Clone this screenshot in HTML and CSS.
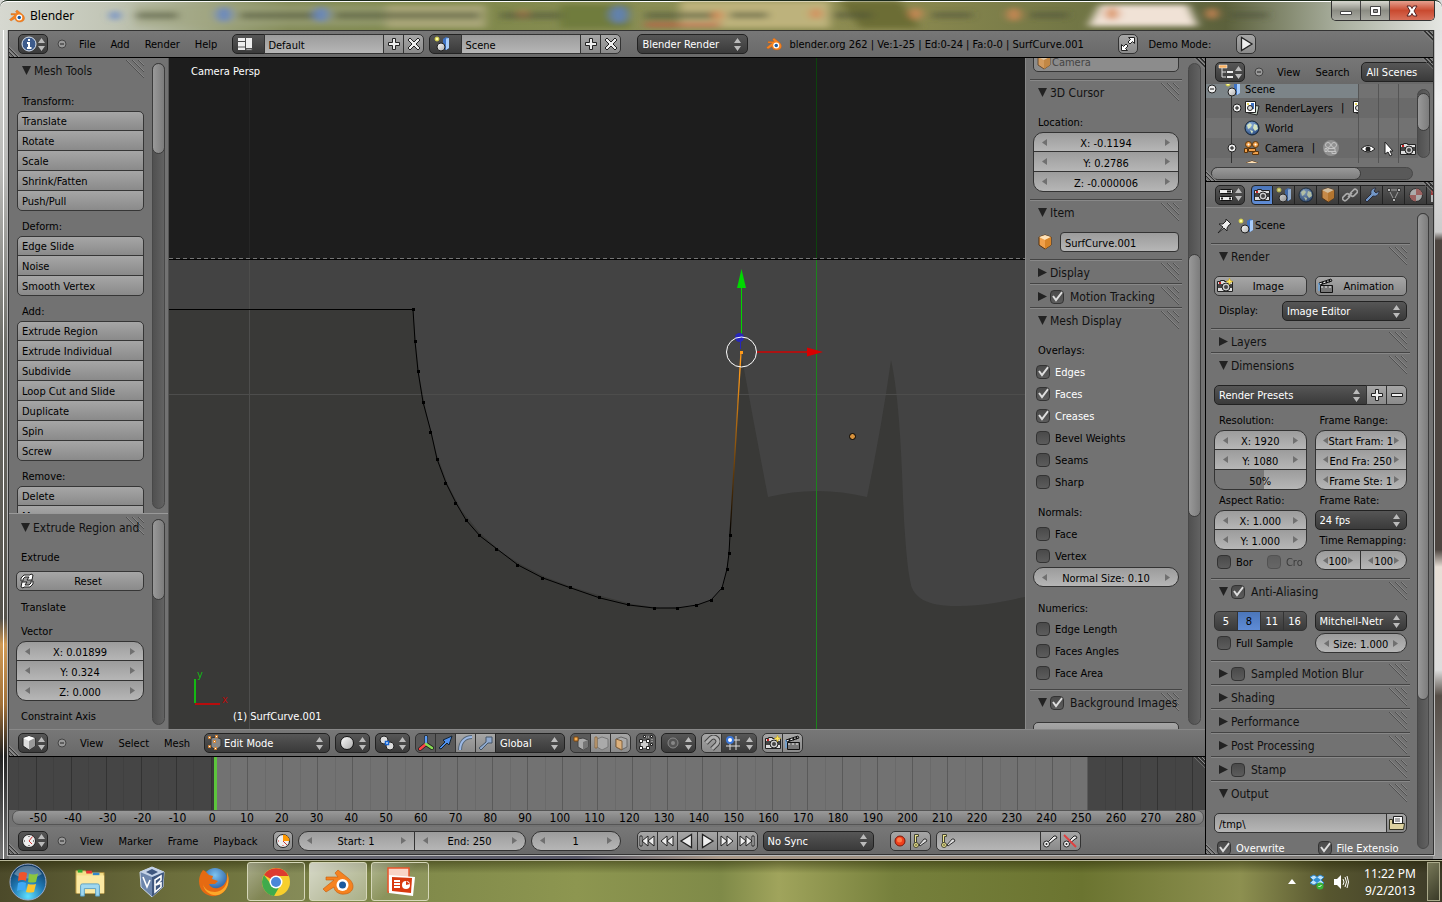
FILE: index.html
```html
<!DOCTYPE html>
<html lang="en">
<head>
<meta charset="utf-8">
<title>Blender</title>
<link rel="stylesheet" href="styles.css">
</head>
<body>
<svg class="defs" aria-hidden="true">
  <defs>
    <linearGradient id="gw" x1="0" y1="0" x2="1" y2="1"><stop offset="0" stop-color="#fff"/><stop offset="1" stop-color="#aaa"/></linearGradient>
    <radialGradient id="gb" cx=".4" cy=".3" r=".8"><stop offset="0" stop-color="#8fb4e0"/><stop offset="1" stop-color="#1e3f75"/></radialGradient>
    <radialGradient id="orb" cx=".5" cy=".9" r=".9"><stop offset="0" stop-color="#5fe0ff"/><stop offset=".5" stop-color="#1f78b4"/><stop offset="1" stop-color="#0d3256"/></radialGradient>
    <radialGradient id="globe" cx=".5" cy=".3" r=".8"><stop offset="0" stop-color="#7ec4f0"/><stop offset="1" stop-color="#123f8c"/></radialGradient>
  </defs>
  <symbol id="blender" viewBox="0 0 32 26"><path d="M1 20 12 11H4V8h12l-3-4 3-3 10 8c8 6 6 15-3 16-6 1-11-3-11-7L4 23z" fill="#f58220" stroke="#c25a0c" stroke-width=".6"/><circle cx="20.500" cy="16" r="6" fill="#fff"/><circle cx="20.500" cy="16" r="3.500" fill="#1d5a9e"/></symbol>
  <symbol id="info" viewBox="0 0 16 16"><circle cx="8" cy="8" r="7" fill="#3d5b8c" stroke="#dde6f2"/><path d="M8 3v2M6 7h2v5M6 12h4.500" stroke="#fff" stroke-width="2" fill="none"/></symbol>
  <symbol id="layout" viewBox="0 0 16 16"><path d="M1 2h7v3H1zM1 6h7v8H1zM9 2h6v10H9z" fill="#eee"/><path d="M1 11h7M9 12.500h6v1.500H9z" stroke="#555" fill="#eee"/></symbol>
  <symbol id="plus" viewBox="0 0 16 16"><path d="M6.500 2.500h3v4h4v3h-4v4h-3v-4h-4v-3h4z" fill="#eee" stroke="#222"/></symbol>
  <symbol id="minus" viewBox="0 0 16 16"><path d="M2.500 6.500h11v3h-11z" fill="#eee" stroke="#222"/></symbol>
  <symbol id="cross" viewBox="0 0 16 16"><path d="M4 2l4 4 4-4 2 2-4 4 4 4-2 2-4-4-4 4-2-2 4-4-4-4z" fill="#eee" stroke="#222"/></symbol>
  <symbol id="scene" viewBox="0 0 16 16"><path d="M9 3l3-2 3 1v10l-3 2-3-1z" fill="#3d72c4"/><path d="M12 2.500l3-.5v10l-3 2z" fill="#a9cdfa"/><circle cx="7" cy="11" r="4" fill="url(#gw)" stroke="#222"/><circle cx="3" cy="3" r="2" fill="#ffffa0" stroke="#cfc840"/></symbol>
  <symbol id="full" viewBox="0 0 16 16"><path d="M8.500 1.500h6v6l-2-2-2.500 2.500-2-2 2.500-2.500zM7.500 14.500h-6v-6l2 2 2.500-2.500 2 2-2.500 2.500z" fill="#fff" stroke="#222"/></symbol>
  <symbol id="play" viewBox="0 0 16 16"><path d="M3.500 1.500v13L14 8z" fill="#eee" stroke="#222" stroke-width="1.300"/></symbol>
  <symbol id="rplay" viewBox="0 0 16 16"><path d="M12.500 1.500v13L2 8z" fill="#eee" stroke="#222" stroke-width="1.300"/></symbol>
  <symbol id="ff" viewBox="0 0 16 16"><path d="M2 3v10l6-5zM8 3v10l6-5z" fill="#eee" stroke="#222"/></symbol>
  <symbol id="rw" viewBox="0 0 16 16"><path d="M14 3v10L8 8zM8 3v10L2 8z" fill="#eee" stroke="#222"/></symbol>
  <symbol id="end" viewBox="0 0 16 16"><path d="M1 3v10l6-5zM7 3v10l6-5zM13 3h2v10h-2z" fill="#eee" stroke="#222"/></symbol>
  <symbol id="start" viewBox="0 0 16 16"><path d="M15 3v10L9 8zM9 3v10L3 8zM1 3h2v10H1z" fill="#eee" stroke="#222"/></symbol>
  <symbol id="cubew" viewBox="0 0 16 16"><path d="M8 1l6 2v8l-6 4-6-4V3z" fill="#ddd" stroke="#222"/><path d="M2 3l6 3 6-3-6-2z" fill="#fff"/><path d="M8 6l6-3v8l-6 4z" fill="#999"/></symbol>
  <symbol id="cubeo" viewBox="0 0 16 16"><path d="M8 1l6 2v8l-6 4-6-4V3z" fill="#f0a04a" stroke="#54300c"/><path d="M2 3l6 3 6-3-6-2z" fill="#ffe2b8"/><path d="M8 6l6-3v8l-6 4z" fill="#d88528"/></symbol>
  <symbol id="edit" viewBox="0 0 16 16"><path d="M4 3l5-1 5 2v7l-5 4-5-3z" fill="#888" stroke="#333"/><g fill="#fff" stroke="#d9822b"><path d="M1.500 1.500h2v2h-2zM6.500 5.500h2v2h-2zM8.500.5h2v2h-2zM1.500 10.500h2v2h-2zM7.500 12.500h2v2h-2z"/></g></symbol>
  <symbol id="ball" viewBox="0 0 16 16"><circle cx="8" cy="8" r="6.500" fill="url(#gw)" stroke="#111"/></symbol>
  <symbol id="pivot" viewBox="0 0 16 16"><circle cx="5" cy="5" r="4" fill="#ddd" stroke="#222"/><circle cx="11" cy="11" r="4" fill="#ddd" stroke="#222"/><path d="M6.500 6.500h3v3h-3z" fill="#fff" stroke="#1666d6" stroke-width="1.500"/></symbol>
  <symbol id="manip" viewBox="0 0 16 16"><g stroke-linecap="round"><path d="M8 9V2M8 9l-6 5M8 9l6 4" stroke="#222" stroke-width="4"/><path d="M8 9V2" stroke="#5c9df5" stroke-width="2.500"/><path d="M8 9l-6 5" stroke="#f44" stroke-width="2.500"/><path d="M8 9l6 4" stroke="#8d5" stroke-width="2.500"/></g></symbol>
  <symbol id="arrow" viewBox="0 0 16 16"><path d="M1 13l6-6-2-2 9-4-3 9-2-2-6 6z" fill="#4f90ee" stroke="#123"/></symbol>
  <symbol id="arc" viewBox="0 0 16 16"><path d="M2 15C2 7 7 2 14 2" fill="none" stroke="#567" stroke-width="4"/><path d="M2 15C2 7 7 2 14 2" fill="none" stroke="#9db9e6" stroke-width="2"/></symbol>
  <symbol id="scalei" viewBox="0 0 16 16"><path d="M8 2h6v6h-4l-7 7-2-2 7-6z" fill="#8fa9cf" stroke="#456"/></symbol>
  <symbol id="vsel" viewBox="0 0 16 16"><path d="M5 4l5-1 5 2v7l-5 3-5-3z" fill="#aaa" stroke="#444"/><path d="M10 7l5-2v7l-5 3z" fill="#777"/><path d="M1 2h4v4H1z" fill="#f5ac50" stroke="#7a4710"/></symbol>
  <symbol id="esel" viewBox="0 0 16 16"><path d="M4 4l5-2 6 2v8l-6 3-5-3z" fill="#aaa" stroke="#777"/><path d="M2 2h2v11H2z" fill="#d8b58a" stroke="#8a6a45"/></symbol>
  <symbol id="fsel" viewBox="0 0 16 16"><path d="M3 4l5-2 6 2v8l-6 3-5-3z" fill="#aaa" stroke="#666"/><path d="M3 4l6 2v9l-6-3z" fill="#dcb07c" stroke="#80603c"/></symbol>
  <symbol id="occ" viewBox="0 0 16 16"><path d="M3 6h7v7H3z" fill="#ccc"/><path d="M6 2h8v8" fill="none" stroke="#ccc" stroke-dasharray="1 1"/><g fill="#fff" stroke="#222"><path d="M1.500 4.500h3v3h-3zM8.500 4.500h3v3h-3zM1.500 11.500h3v3h-3zM8.500 11.500h3v3h-3zM5.500.5h2v2h-2zM12.500.5h2v2h-2zM12.500 8.500h2v2h-2z"/></g></symbol>
  <symbol id="prop" viewBox="0 0 16 16"><circle cx="8" cy="8" r="5" fill="#555" stroke="#888"/><circle cx="8" cy="8" r="2" fill="#888"/></symbol>
  <symbol id="magnet" viewBox="0 0 16 16"><path d="M2 8l5-5c4-3 9 2 6 6l-5 5" fill="none" stroke="#444" stroke-width="5"/><path d="M2 8l5-5c4-3 9 2 6 6l-5 5" fill="none" stroke="#b0b0b0" stroke-width="3"/></symbol>
  <symbol id="snap" viewBox="0 0 16 16"><path d="M5 1v14M11 1v14M1 5h14M1 11h14" stroke="#ddd"/><circle cx="5" cy="5" r="3" fill="#fff" stroke="#3975d8" stroke-width="2"/></symbol>
  <symbol id="camera" viewBox="0 0 16 16"><path d="M.5 3.500h3v-1h4v1h8v10H.5z" fill="#ddd" stroke="#222"/><path d="M1 6h14v4H1z" fill="#444"/><circle cx="9" cy="9" r="4" fill="#ccc" stroke="#222"/><circle cx="9" cy="9" r="2" fill="#444"/><path d="M2 5h2" stroke="#c22" stroke-width="2"/></symbol>
  <symbol id="camstar" viewBox="0 0 16 16"><use href="#camera"/><path d="M12.500 0l1 2.500 2.500 1-2.500 1-1 2.500-1-2.500-2.500-1 2.500-1z" fill="#ffe75c" stroke="#b89610" stroke-width=".5"/></symbol>
  <symbol id="clap" viewBox="0 0 16 16"><path d="M2.500 7.500h12v7h-12z" fill="#777" stroke="#111"/><path d="M1 5l12-4 1 2L2 7z" fill="#eee" stroke="#111"/><path d="M4 4l1 2M8 3l1 2M11 2l1 2" stroke="#111" stroke-width="2"/><path d="M3 9h11" stroke="#eee" stroke-dasharray="2 2"/><path d="M1 5v8" stroke="#5af"/></symbol>
  <symbol id="reload" viewBox="0 0 16 16"><g fill="#fff" stroke="#222"><path d="M2 8V5l3-3h6l1-1 2 1-1 5H8l2-3H6L4 6v2z"/><path d="M14 8v3l-3 3H5l-1 1-2-1 1-5h5l-2 3h4l2-2V8z"/></g></symbol>
  <symbol id="clock" viewBox="0 0 16 16"><circle cx="8" cy="8" r="6.500" fill="#eee" stroke="#222"/><path d="M8 3v1M8 12v1M3 8h1M12 8h1" stroke="#222"/><path d="M11.500 3.500L8 8l3 3" fill="none" stroke="#c33"/></symbol>
  <symbol id="clocko" viewBox="0 0 16 16"><circle cx="8" cy="8" r="6.500" fill="#eee" stroke="#222"/><path d="M8 1.500V8h6.500A6.500 6.500 0 0 0 8 1.500z" fill="#f90"/><path d="M8 8l4 4M3 8h1M8 12v1" stroke="#c33"/></symbol>
  <symbol id="tree" viewBox="0 0 16 16"><path d="M1 1h8v3H1z" fill="#f9b060" stroke="#fff" stroke-width=".5"/><path d="M4 4v9h4M4 8h4" fill="none" stroke="#ddd"/><path d="M9 7h6v2H9zM9 12h6v2H9z" fill="#eee"/></symbol>
  <symbol id="props" viewBox="0 0 16 16"><rect x="1.500" y="2.500" width="13" height="4" rx="1" fill="#eee" stroke="#111"/><path d="M9 4.500h4" stroke="#222" stroke-width="2"/><rect x="1.500" y="9.500" width="13" height="4" rx="1" fill="#eee" stroke="#111"/><path d="M3 11.500h2M11 11.500h2" stroke="#222" stroke-width="2"/></symbol>
  <symbol id="layers" viewBox="0 0 16 16"><path d="M6 5l9 1-2 9-9-2z" fill="#ccd8cc" stroke="#222"/><path d="M1.500 1.500h10v11h-10z" fill="#fff" stroke="#222"/><path d="M7 3h3v6H7z" fill="#3d72c4"/><circle cx="6" cy="8" r="2.500" fill="#ddd" stroke="#222"/><path d="M3 3h2v2H3z" fill="#e8d860"/></symbol>
  <symbol id="world" viewBox="0 0 16 16"><circle cx="8" cy="8" r="7" fill="url(#gb)" stroke="#123"/><path d="M3 5l3-2 2 2-2 3-2 1zM10 4l3 1 1 4-3 2-2-3zM6 10l3 1-1 3z" fill="#d4e4c2"/></symbol>
  <symbol id="cine" viewBox="0 0 16 16"><g fill="#f0a04a" stroke="#5b340b"><circle cx="4.500" cy="4.500" r="3"/><circle cx="11.500" cy="4.500" r="3"/><path d="M4.500 8.500h7v3h-7z"/><path d="M.5 8.500h3v4h-3zM8.500 12.500l3-1h3v3h-6z"/></g><circle cx="4.500" cy="4.500" r="1" fill="#fff"/><circle cx="11.500" cy="4.500" r="1" fill="#fff"/></symbol>
  <symbol id="cineg" viewBox="0 0 16 16"><circle cx="8" cy="8" r="8" fill="#909090"/><g fill="#909090" stroke="#c4c4c4"><circle cx="5" cy="5" r="2.500"/><circle cx="11" cy="5" r="2.500"/><path d="M5 8.500h7v3H5zM2 8.500h2v3H2zM9 11.500h4v2H9z"/></g></symbol>
  <symbol id="eye" viewBox="0 0 16 16"><path d="M1 8q7-7 14 0-7 6-14 0z" fill="#fff" stroke="#222"/><circle cx="8" cy="8" r="2.500" fill="#222"/></symbol>
  <symbol id="cursor" viewBox="0 0 16 16"><path d="M5 1v12l3-2 2 4 2-1-2-4h3z" fill="#fff" stroke="#222"/></symbol>
  <symbol id="chain" viewBox="0 0 16 16"><g fill="none" stroke="#ccc" stroke-width="1.600"><rect x="0" y="8" width="8" height="4.500" rx="2.200" transform="rotate(-45 4 10)"/><rect x="8" y="3.500" width="8" height="4.500" rx="2.200" transform="rotate(-45 12 6)"/><path d="M6 10l4-4"/></g></symbol>
  <symbol id="wrench" viewBox="0 0 16 16"><path d="M3 15l-2-2 6-6C6 4 8 1 12 1l-2 3 2 2 3-2c0 4-3 6-6 5z" fill="#7fb0f0" stroke="#223"/></symbol>
  <symbol id="vdata" viewBox="0 0 16 16"><path d="M3 3h10L8 13z" fill="none" stroke="#bbb"/><g fill="#ddd" stroke="#333"><path d="M1.500 1.500h3v3h-3zM11.500 1.500h3v3h-3zM6.500 11.500h3v3h-3z"/></g></symbol>
  <symbol id="mat" viewBox="0 0 16 16"><circle cx="8" cy="8" r="6.500" fill="#ccc" stroke="#222"/><path d="M8 8V1.500A6.500 6.500 0 0 1 14.500 8zM8 8v6.500A6.500 6.500 0 0 1 1.500 8z" fill="#b86a68"/></symbol>
  <symbol id="checker" viewBox="0 0 16 16"><path d="M1 1h14v14H1z" fill="#ddd"/><path d="M1 1h7v7H1zM8 8h7v7H8z" fill="#b83a3a"/></symbol>
  <symbol id="pin" viewBox="0 0 16 16"><path d="M10 1l5 5-2 1-2 3 0 3-3-3-6 5 5-6-4-3 4 0 3-3z" fill="#eee" stroke="#222"/></symbol>
  <symbol id="folder" viewBox="0 0 16 16"><path d="M4.500 1.500h9v9h-9z" fill="#fff" stroke="#222"/><path d="M6 4h5M6 6h5" stroke="#555"/><path d="M.5 4.500h3v4h12l-1 6H.5z" fill="#ddd2a0" stroke="#332"/></symbol>
  <symbol id="rec" viewBox="0 0 16 16"><circle cx="8" cy="8" r="5" fill="#f0401c" stroke="#7c1608"/><circle cx="7.500" cy="7" r="2.500" fill="#ff7a48"/></symbol>
  <symbol id="key" viewBox="0 0 16 16"><path d="M6 9l6-6h2l1 2-2 1-6 5z" fill="#eee" stroke="#222"/><circle cx="4.500" cy="11" r="3" fill="#eee" stroke="#222"/><circle cx="4.500" cy="11" r="1" fill="#222"/></symbol>
  <symbol id="keying" viewBox="0 0 16 16"><path d="M7 12l5-6h2l1 2-7 5z" fill="#ddd" stroke="#333"/><path d="M2.500 1.500h4v2h-2v6h-2z" fill="#ece48a" stroke="#443"/><circle cx="4" cy="12" r="2.500" fill="#ece48a" stroke="#443"/><circle cx="4" cy="12" r=".8" fill="#332"/></symbol>
  <symbol id="keyx" viewBox="0 0 16 16"><use href="#key"/><path d="M2 2l12 12" stroke="#e04040" stroke-width="2"/></symbol>
  <symbol id="col" viewBox="0 0 10 10"><circle cx="5" cy="5" r="4" fill="#999" stroke="#444"/><path d="M3 5h4" stroke="#222"/></symbol>
  <symbol id="ex" viewBox="0 0 10 10"><circle cx="5" cy="5" r="4" fill="#eee" stroke="#222"/><path d="M3 5h4M5 3v4" stroke="#111"/></symbol>
  <symbol id="exm" viewBox="0 0 10 10"><circle cx="5" cy="5" r="4" fill="#eee" stroke="#222"/><path d="M3 5h4" stroke="#111"/></symbol>
</svg>

<div class="window">
  <header class="titlebar">
    <svg class="glass" viewBox="0 0 1442 30" preserveAspectRatio="none" aria-hidden="true">
      <defs><filter id="soft"><feGaussianBlur stdDeviation="5 3"/></filter></defs>
      <g filter="url(#soft)">
        <path d="M136 4h250v22H136z" fill="#a0a582" opacity=".5"/>
        <path d="M386 4h100v24H386z" fill="#a9a678"/><path d="M560 4h70v24h-70z" fill="#6f7c3c"/>
        <path d="M680 0h150v28H680z" fill="#bdb27c"/><path d="M840 0h60l20 28h-60z" fill="#6c6d34"/>
        <path d="M1100 4h88l10 22h-110z" fill="#f0e2d6"/>
        <g fill="#5f84cc" opacity=".8"><circle cx="115" cy="15" r="5"/><circle cx="224" cy="14" r="8"/><circle cx="321" cy="14" r="8"/><circle cx="619" cy="14" r="9"/></g>
        <g fill="#d98a56" opacity=".8"><circle cx="523" cy="14" r="5"/><circle cx="717" cy="15" r="6"/><circle cx="816" cy="13" r="6"/><circle cx="916" cy="13" r="6"/><circle cx="1014" cy="14" r="7"/><circle cx="1112" cy="13" r="7"/><circle cx="1212" cy="13" r="6"/></g>
        <g fill="#4c4f35" opacity=".5"><path d="M136 11h42v8h-42zM240 11h74v8h-74zM335 11h145v8H335zM500 11h62v8h-62zM645 11h68v8h-68zM730 11h38v7h-38zM832 11h40v7h-40zM932 11h40v7h-40zM1030 11h38v7h-38zM1230 11h38v7h-38z"/></g>
        <path d="M645 23h75v3h-75z" fill="#c4553f"/>
      </g>
    </svg>
    <svg class="logo"><use href="#blender"/></svg>
    <h1>Blender</h1>
    <div class="winbtns">
      <button type="button" aria-label="Minimize"><svg viewBox="0 0 14 12"><path d="M1.500 6.500h11v3h-11z" fill="#fff" stroke="#444"/></svg></button>
      <button type="button" aria-label="Maximize"><svg viewBox="0 0 14 12"><path d="M2.500 1.500h10v9h-10z" fill="#fff" stroke="#444"/><path d="M5.500 4.500h4v3h-4z" fill="#999" stroke="#444"/></svg></button>
      <button type="button" class="close" aria-label="Close"><svg viewBox="0 0 14 12"><path d="M2 1h3.500L7 3.500 8.500 1H12L9 6l3 5H8.500L7 8.500 5.500 11H2l3-5z" fill="#fff" stroke="#522"/></svg></button>
    </div>
  </header>

  <div class="app">
    <div class="bar info corner-tr corner-bl">
      <button class="ed" type="button" aria-label="Editor type: Info"><svg><use href="#info"/></svg></button>
      <svg class="col"><use href="#col"/></svg>
      <nav class="menu"><button type="button">File</button><button type="button">Add</button><button type="button">Render</button><button type="button">Help</button></nav>
      <div class="idb"><button class="dk" type="button" aria-label="Screen layouts"><svg><use href="#layout"/></svg></button><input type="text" value="Default" aria-label="Screen"><button type="button" aria-label="Add screen"><svg><use href="#plus"/></svg></button><button type="button" aria-label="Delete screen"><svg><use href="#cross"/></svg></button></div>
      <div class="idb"><button class="dk" type="button" aria-label="Scenes"><svg><use href="#scene"/></svg></button><input type="text" value="Scene" aria-label="Scene"><button type="button" aria-label="Add scene"><svg><use href="#plus"/></svg></button><button type="button" aria-label="Delete scene"><svg><use href="#cross"/></svg></button></div>
      <select class="w110 engine" aria-label="Render engine"><option>Blender Render</option></select>
      <svg class="blogo"><use href="#blender"/></svg>
      <span class="stats">blender.org 262 | Ve:1-25 | Ed:0-24 | Fa:0-0 | SurfCurve.001</span>
      <button class="sq fulls" type="button" aria-label="Full screen"><svg><use href="#full"/></svg></button>
      <span class="demo">Demo Mode:</span>
      <button class="sq" type="button" aria-label="Play demo"><svg><use href="#play"/></svg></button>
    </div>

    <div class="main">
      <div class="left">
        <div class="view">
          <aside class="shelf">
            <section class="region">
              <div class="inner">
                <h2 class="head open">Mesh Tools</h2>
                <div class="body">
                  <p class="lbl">Transform:</p>
                  <div class="grp"><button type="button">Translate</button><button type="button">Rotate</button><button type="button">Scale</button><button type="button">Shrink/Fatten</button><button type="button">Push/Pull</button></div>
                  <p class="lbl">Deform:</p>
                  <div class="grp"><button type="button">Edge Slide</button><button type="button">Noise</button><button type="button">Smooth Vertex</button></div>
                  <p class="lbl">Add:</p>
                  <div class="grp"><button type="button">Extrude Region</button><button type="button">Extrude Individual</button><button type="button">Subdivide</button><button type="button">Loop Cut and Slide</button><button type="button">Duplicate</button><button type="button">Spin</button><button type="button">Screw</button></div>
                  <p class="lbl">Remove:</p>
                  <div class="grp"><button type="button">Delete</button><button type="button">Merge</button></div>
                </div>
              </div>
              <div class="vs"><i class="t90"></i></div>
            </section>
            <section class="region oper">
              <div class="inner">
                <h2 class="head open">Extrude Region and</h2>
                <div class="body">
                  <p class="lbl">Extrude</p>
                  <button class="btn ic reset" type="button"><svg><use href="#reload"/></svg><span>Reset</span></button>
                  <p class="lbl gap">Translate</p>
                  <p class="lbl gap2">Vector</p>
                  <div class="grp num"><input type="text" value="X: 0.01899" aria-label="Vector X"><input type="text" value="Y: 0.324" aria-label="Vector Y"><input type="text" value="Z: 0.000" aria-label="Vector Z"></div>
                  <p class="lbl">Constraint Axis</p>
                  <div class="chk axis"><input type="checkbox" aria-label="Constrain X axis"></div>
                </div>
              </div>
              <div class="vs"><i class="t80"></i></div>
            </section>
          </aside>

          <svg class="canvas" viewBox="169 58 856 671" preserveAspectRatio="xMidYMid slice" role="img" aria-label="3D view">
            <path d="M169 58h856v671H169z" fill="#434343"/>
            <path d="M169 58h856v201H169z" fill="#1d1d1d"/>
            <path d="M249.500 58v201" stroke="#262626"/>
            <path d="M169 310H413L416 345 420 380 428 420 437 455 448 485 462 511 480 533 500 551 520 564 545 577 575 588 605 597 632 604 660 608 690 607 712 600 723 588 729 555 732 510 738 400 742 358Q755 430 768 497 817 485 867 497 882 425 891 360C900 400 902 470 904 520 906 550 908 575 912 588 920 606 945 606 960 606 985 606 1010 600 1025 597V729H169z" fill="#393937"/>
            <path d="M249.500 260v469M169 394.500h856" stroke="#4d4d4c"/>
            <path d="M816.500 58v201" stroke="#0d420d"/><path d="M816.500 260v469" stroke="#1c831c"/>
            <path d="M169 258.500h856" stroke="#777" stroke-dasharray="4 3"/><path d="M169 259.500h856" stroke="#000"/>
            <path fill="none" stroke="#000" d="M169 309.500H413L415 341 418 371 423 402 431 432 437 459 446 483 456 503 466 520 480 536 497 549 518 565 543 578 571 588 600 598 629 605 654 608 677 608 697 605 711 600 722 588 727 569 729 553 730 535"/>
            <path d="M412 308h3v3h-3zM414 340h3v3h-3zM417 370h3v3h-3zM422 401h3v3h-3zM429 431h3v3h-3zM436 458h3v3h-3zM444 482h3v3h-3zM454 502h3v3h-3zM465 519h3v3h-3zM478 534h3v3h-3zM495 548h3v3h-3zM516 564h3v3h-3zM541 577h3v3h-3zM569 586h3v3h-3zM598 596h3v3h-3zM627 603h3v3h-3zM653 607h3v3h-3zM676 607h3v3h-3zM695 604h3v3h-3zM710 599h3v3h-3zM721 587h3v3h-3zM726 568h3v3h-3zM728 552h3v3h-3zM729 534h3v3h-3z"/>
            <defs><linearGradient id="sel" gradientUnits="userSpaceOnUse" x1="0" y1="352" x2="0" y2="535"><stop offset=".1" stop-color="#ff9a1a"/><stop offset="1" stop-color="#000"/></linearGradient></defs>
            <path d="M741 352L730 535" stroke="url(#sel)" stroke-width="1.300"/>
            <path d="M741 286h1v50h-1z" fill="#00d800"/><path d="M741.500 269l-4.500 19h9z" fill="#00d800"/>
            <path d="M757 351.500h52v1h-52z" fill="#d80000" stroke="#d80000" stroke-width=".4"/><path d="M807 347.500v9l16-4.500z" fill="#d80000"/>
            <circle cx="739.500" cy="337.500" r="4.500" fill="#2727b8"/><path d="M740 340h1v9h-1z" fill="#2727b8"/>
            <circle cx="741.500" cy="352" r="15" fill="none" stroke="#fff"/><path d="M740 351h3v3h-3z" fill="#ff9a1a"/>
            <circle cx="852.500" cy="436.500" r="3" fill="#d8923c" stroke="#000"/>
            <path d="M194 679h2v24h-2z" fill="#13b813"/><path d="M195 703h25v2h-25z" fill="#b80c0c"/>
            <text x="197" y="678" fill="#13b813">y</text><text x="222" y="703" fill="#b80c0c">x</text>
            <text x="191" y="75" fill="#fff">Camera Persp</text><text x="233" y="720" fill="#fff">(1) SurfCurve.001</text>
          </svg>

          <aside class="npanel region corner-tr">
            <div class="inner">
              <div class="body camrow"><button class="btn ic dim" type="button"><svg><use href="#cubeo"/></svg><span>Camera</span></button></div>
              <h2 class="head open">3D Cursor</h2>
              <div class="body"><p class="lbl">Location:</p><div class="grp num"><input type="text" value="X: -0.1194" aria-label="Cursor X"><input type="text" value="Y: 0.2786" aria-label="Cursor Y"><input type="text" value="Z: -0.000006" aria-label="Cursor Z"></div></div>
              <h2 class="head open">Item</h2>
              <div class="body item"><svg><use href="#cubeo"/></svg><input class="txt" type="text" value="SurfCurve.001" aria-label="Item name"></div>
              <h2 class="head">Display</h2>
              <h2 class="head"><label><input type="checkbox" checked>Motion Tracking</label></h2>
              <h2 class="head open">Mesh Display</h2>
              <div class="body checks">
                <p class="lbl">Overlays:</p>
                <label class="chk on"><input type="checkbox" checked><span>Edges</span></label>
                <label class="chk on"><input type="checkbox" checked><span>Faces</span></label>
                <label class="chk on"><input type="checkbox" checked><span>Creases</span></label>
                <label class="chk"><input type="checkbox"><span>Bevel Weights</span></label>
                <label class="chk"><input type="checkbox"><span>Seams</span></label>
                <label class="chk"><input type="checkbox"><span>Sharp</span></label>
                <p class="lbl sp">Normals:</p>
                <label class="chk"><input type="checkbox"><span>Face</span></label>
                <label class="chk"><input type="checkbox"><span>Vertex</span></label>
                <div class="grp num"><input type="text" value="Normal Size: 0.10" aria-label="Normal size"></div>
                <p class="lbl sp">Numerics:</p>
                <label class="chk"><input type="checkbox"><span>Edge Length</span></label>
                <label class="chk"><input type="checkbox"><span>Faces Angles</span></label>
                <label class="chk"><input type="checkbox"><span>Face Area</span></label>
              </div>
              <h2 class="head open"><label><input type="checkbox" checked>Background Images</label></h2>
              <div class="body"><button class="btn" type="button" aria-label="Add image"></button></div>
            </div>
            <div class="vs"><i class="tn"></i></div>
          </aside>
        </div>

        <div class="bar vbar corner-bl">
          <button class="ed" type="button" aria-label="Editor type: 3D View"><svg><use href="#cubew"/></svg></button>
          <svg class="col"><use href="#col"/></svg>
          <nav class="menu"><button type="button">View</button><button type="button">Select</button><button type="button">Mesh</button></nav>
          <label class="isel mode"><svg><use href="#edit"/></svg><select aria-label="Mode"><option>Edit Mode</option></select></label>
          <button class="ed wide" type="button" aria-label="Shading"><svg><use href="#ball"/></svg></button>
          <button class="ed wide" type="button" aria-label="Pivot"><svg><use href="#pivot"/></svg></button>
          <div class="row"><button class="dn" type="button" aria-label="Manipulator"><svg><use href="#manip"/></svg></button><button class="dn" type="button" aria-label="Translate manipulator"><svg><use href="#arrow"/></svg></button><button type="button" aria-label="Rotate manipulator"><svg><use href="#arc"/></svg></button><button type="button" aria-label="Scale manipulator"><svg><use href="#scalei"/></svg></button><select class="w70" aria-label="Orientation"><option>Global</option></select></div>
          <div class="row"><button class="dn" type="button" aria-label="Vertex select"><svg><use href="#vsel"/></svg></button><button type="button" aria-label="Edge select"><svg><use href="#esel"/></svg></button><button type="button" aria-label="Face select"><svg><use href="#fsel"/></svg></button></div>
          <button class="sq dn" type="button" aria-label="Limit to visible"><svg><use href="#occ"/></svg></button>
          <button class="ed wide" type="button" aria-label="Proportional editing"><svg><use href="#prop"/></svg></button>
          <div class="row"><button type="button" aria-label="Snap"><svg><use href="#magnet"/></svg></button><button class="ed wide" type="button" aria-label="Snap element"><svg><use href="#snap"/></svg></button></div>
          <div class="row"><button type="button" aria-label="Render image"><svg><use href="#camstar"/></svg></button><button type="button" aria-label="Render animation"><svg><use href="#clap"/></svg></button></div>
        </div>

        <div class="timeline corner-tr"><div class="before"></div><div class="during"></div><div class="after"></div></div>
        <div class="ruler"><div><span>-50</span><span>-40</span><span>-30</span><span>-20</span><span>-10</span><span>0</span><span>10</span><span>20</span><span>30</span><span>40</span><span>50</span><span>60</span><span>70</span><span>80</span><span>90</span><span>100</span><span>110</span><span>120</span><span>130</span><span>140</span><span>150</span><span>160</span><span>170</span><span>180</span><span>190</span><span>200</span><span>210</span><span>220</span><span>230</span><span>240</span><span>250</span><span>260</span><span>270</span><span>280</span></div></div>
        <div class="bar tbar corner-bl">
          <button class="ed" type="button" aria-label="Editor type: Timeline"><svg><use href="#clock"/></svg></button>
          <svg class="col"><use href="#col"/></svg>
          <nav class="menu"><button type="button">View</button><button type="button">Marker</button><button type="button">Frame</button><button type="button">Playback</button></nav>
          <button class="sq" type="button" aria-label="Use preview range"><svg><use href="#clocko"/></svg></button>
          <div class="row numrow"><input class="w116" type="text" value="Start: 1" aria-label="Start frame"><input class="w112" type="text" value="End: 250" aria-label="End frame"></div>
          <div class="row numrow"><input class="w90" type="text" value="1" aria-label="Current frame"></div>
          <div class="row transport"><button type="button" aria-label="Jump to start"><svg><use href="#start"/></svg></button><button type="button" aria-label="Previous keyframe"><svg><use href="#rw"/></svg></button><button type="button" aria-label="Play reverse"><svg><use href="#rplay"/></svg></button><button type="button" aria-label="Play"><svg><use href="#play"/></svg></button><button type="button" aria-label="Next keyframe"><svg><use href="#ff"/></svg></button><button type="button" aria-label="Jump to end"><svg><use href="#end"/></svg></button></div>
          <select class="w110" aria-label="Sync"><option>No Sync</option></select>
          <div class="row rec"><button type="button" aria-label="Auto key"><svg><use href="#rec"/></svg></button><button type="button" aria-label="Keying"><svg><use href="#keying"/></svg></button></div>
          <div class="row keyset"><button class="fld" type="button" aria-label="Active keying set"><svg><use href="#keying"/></svg></button><button type="button" aria-label="Insert keyframe"><svg><use href="#key"/></svg></button><button type="button" aria-label="Delete keyframe"><svg><use href="#keyx"/></svg></button></div>
        </div>
      </div>

      <div class="right">
        <div class="bar obar corner-tr">
          <button class="ed" type="button" aria-label="Editor type: Outliner"><svg><use href="#tree"/></svg></button>
          <svg class="col"><use href="#col"/></svg>
          <nav class="menu"><button type="button">View</button><button type="button">Search</button></nav>
          <select class="scenes" aria-label="Display mode"><option>All Scenes</option></select>
        </div>
        <div class="outliner">
          <ul>
            <li class="hl"><svg class="e"><use href="#exm"/></svg><svg><use href="#scene"/></svg><span>Scene</span></li>
            <li class="l1"><svg class="e"><use href="#ex"/></svg><svg><use href="#layers"/></svg><span>RenderLayers</span><b>|</b><svg class="half"><use href="#layers"/></svg></li>
            <li class="l2"><svg><use href="#world"/></svg><span>World</span></li>
            <li class="l3"><svg class="e"><use href="#ex"/></svg><svg><use href="#cine"/></svg><span>Camera</span><b>|</b><svg class="dat"><use href="#cineg"/></svg></li>
            <li class="l2"><svg><use href="#cubeo"/></svg></li>
          </ul>
          <div class="cols"><span><svg><use href="#eye"/></svg></span><span><svg><use href="#cursor"/></svg></span><span><svg><use href="#camera"/></svg></span></div>
          <div class="vs"><i class="to"></i></div>
        </div>
        <div class="hs corner-bl"><div><i></i></div></div>
        <div class="bar pbar corner-tr">
          <button class="ed" type="button" aria-label="Editor type: Properties"><svg><use href="#props"/></svg></button>
          <div class="tabs"><button class="act" type="button" aria-label="Render"><svg><use href="#camera"/></svg></button><button type="button" aria-label="Scene"><svg><use href="#scene"/></svg></button><button type="button" aria-label="World"><svg><use href="#world"/></svg></button><button type="button" aria-label="Object"><svg><use href="#cubeo"/></svg></button><button type="button" aria-label="Constraints"><svg><use href="#chain"/></svg></button><button type="button" aria-label="Modifiers"><svg><use href="#wrench"/></svg></button><button type="button" aria-label="Data"><svg><use href="#vdata"/></svg></button><button type="button" aria-label="Material"><svg><use href="#mat"/></svg></button><button type="button" aria-label="Texture"><svg><use href="#checker"/></svg></button></div>
        </div>
        <section class="region props corner-bl">
          <div class="inner">
            <div class="crumb"><svg><use href="#pin"/></svg><svg><use href="#scene"/></svg><span>Scene</span></div>
            <h2 class="head open">Render</h2>
            <div class="body">
              <div class="two"><button class="btn ic" type="button"><svg><use href="#camstar"/></svg><span>Image</span></button><button class="btn ic" type="button"><svg><use href="#clap"/></svg><span>Animation</span></button></div>
              <div class="disp"><label for="disp">Display:</label><select id="disp"><option>Image Editor</option></select></div>
            </div>
            <h2 class="head">Layers</h2>
            <h2 class="head open">Dimensions</h2>
            <div class="body dims">
              <div class="row preset"><select aria-label="Render presets"><option>Render Presets</option></select><button type="button" aria-label="Add preset"><svg><use href="#plus"/></svg></button><button type="button" aria-label="Remove preset"><svg><use href="#minus"/></svg></button></div>
              <div class="two">
                <div>
                  <p class="lbl">Resolution:</p>
                  <div class="grp num"><input type="text" value="X: 1920" aria-label="Resolution X"><input type="text" value="Y: 1080" aria-label="Resolution Y"><input class="pct" type="text" value="50%" aria-label="Resolution percentage"></div>
                  <p class="lbl">Aspect Ratio:</p>
                  <div class="grp num"><input type="text" value="X: 1.000" aria-label="Aspect X"><input type="text" value="Y: 1.000" aria-label="Aspect Y"></div>
                  <div class="pair"><label class="chk"><input type="checkbox"><span>Bor</span></label><label class="chk off"><input type="checkbox" disabled><span>Cro</span></label></div>
                </div>
                <div>
                  <p class="lbl">Frame Range:</p>
                  <div class="grp num tight"><input type="text" value="Start Fram: 1" aria-label="Start frame"><input type="text" value="End Fra: 250" aria-label="End frame"><input type="text" value="Frame Ste: 1" aria-label="Frame step"></div>
                  <p class="lbl">Frame Rate:</p>
                  <select aria-label="Frame rate"><option>24 fps</option></select>
                  <p class="lbl">Time Remapping:</p>
                  <div class="row numrow tight remap"><input type="text" value="100" aria-label="Old"><input type="text" value="100" aria-label="New"></div>
                </div>
              </div>
            </div>
            <h2 class="head open"><label><input type="checkbox" checked>Anti-Aliasing</label></h2>
            <div class="body">
              <div class="two">
                <div><div class="row samples"><button type="button">5</button><button class="act" type="button">8</button><button type="button">11</button><button type="button">16</button></div><label class="chk"><input type="checkbox"><span>Full Sample</span></label></div>
                <div><select aria-label="Filter"><option>Mitchell-Netr</option></select><div class="grp num size"><input type="text" value="Size: 1.000" aria-label="Filter size"></div></div>
              </div>
            </div>
            <h2 class="head"><label><input type="checkbox">Sampled Motion Blur</label></h2>
            <h2 class="head">Shading</h2>
            <h2 class="head">Performance</h2>
            <h2 class="head">Post Processing</h2>
            <h2 class="head"><label><input type="checkbox">Stamp</label></h2>
            <h2 class="head open">Output</h2>
            <div class="body">
              <div class="row out"><input type="text" value="/tmp\" aria-label="Output path"><button type="button" aria-label="Browse"><svg><use href="#folder"/></svg></button></div>
              <div class="two outchk"><label class="chk on"><input type="checkbox" checked><span>Overwrite</span></label><label class="chk on"><input type="checkbox" checked><span>File Extensio</span></label></div>
            </div>
          </div>
          <div class="vs"><i class="tp"></i></div>
        </section>
      </div>
    </div>
  </div>
</div>

<footer class="taskbar">
  <button class="orb" type="button" aria-label="Start"><svg viewBox="0 0 38 38"><circle cx="19" cy="19" r="18" fill="url(#orb)" stroke="#9ac"/><path d="M5 11a16 16 0 0 1 28 0Q19 20 5 11z" fill="#fff" opacity=".3"/><path d="M10 10q4-2 8 0l-1 8q-4-2-8 0z" fill="#f0542c"/><path d="M20 10.500q4 2 9 0l-2 8.500q-4 1-8 0z" fill="#8cc63e"/><path d="M9 20q4-2 8 0l-1 8q-4-2-8 0z" fill="#3fa9f5"/><path d="M19 21q4 1 8 0l-2 8q-4 1-8 0z" fill="#fdc52e"/></svg></button>
  <button type="button" aria-label="Explorer"><svg viewBox="0 0 34 32"><path d="M2 4h10l2 2h18v22H2z" fill="#f5e08a" stroke="#a8893c"/><path d="M4 3h5v3H4z" fill="#3a3"/><path d="M13 4h6v3h-6z" fill="#e33"/><path d="M20 6h7v3h-7z" fill="#38c"/><path d="M3 9h29v19H3z" fill="#fbe9a2"/><path d="M7 31V20q0-2 2-2h16q2 0 2 2v11h-4v-8H11v8z" fill="#9fd8f0" stroke="#5a9fc4"/></svg></button>
  <button type="button" aria-label="VirtualBox"><svg viewBox="0 0 32 32"><path d="M16 1l12 5-1 15-11 10L5 21 4 6z" fill="#6d86ac" stroke="#ccd8ea"/><path d="M16 11l12-5-1 15-11 10z" fill="#3e567e"/><path d="M4 6l12-5 12 5-12 5z" fill="#c4d2e6"/><path d="M10 6l6-3 6 3-6 3z" fill="#3e567e"/><path d="M7 11l4 10 3-7M19 14v12l6-5v-4l-5 2 5-5v-4z" fill="none" stroke="#fff" stroke-width="1.600"/></svg></button>
  <button type="button" aria-label="Firefox"><svg viewBox="0 0 32 32"><circle cx="17" cy="14" r="12" fill="url(#globe)"/><path d="M5 4q-6 8-3 17c3 8 12 11 19 8 9-4 12-14 8-23 1 8-2 14-9 16-4 1-8-1-9-4h6l3-3-6-2 1-3-4-1-4-4z" fill="#e66a12"/><path d="M29 6c2 10-2 19-12 20-6 0-11-3-12-8 1 8 8 12 15 11 8-2 13-12 9-23z" fill="#fba829"/></svg></button>
  <button class="run" type="button" aria-label="Chrome"><svg viewBox="0 0 32 32"><circle cx="16" cy="16" r="14" fill="#f7cf2c"/><path d="M16 16L4 9A14 14 0 0 1 28.500 10H16z" fill="#dd3b2f"/><path d="M4 9A14 14 0 0 0 14 30l7-12-5-2-6 1z" fill="#3faa4c"/><circle cx="16" cy="16" r="6.500" fill="#fff"/><circle cx="16" cy="16" r="5" fill="#4a86d8"/></svg></button>
  <button class="run on" type="button" aria-label="Blender"><svg viewBox="0 0 32 26"><use href="#blender"/></svg></button>
  <button class="run" type="button" aria-label="PowerPoint"><svg viewBox="0 0 32 32"><path d="M4 2h21v24H4z" fill="#f9d4c6" stroke="#e8552c" stroke-width="1.500"/><path d="M5 9l26 2-2 19-24-3z" fill="#fff"/><path d="M8 11l20 1-1 15-19-2z" fill="#d9390f"/><path d="M10 15h6M10 18h6M10 21h6" stroke="#fff" stroke-width="2"/><circle cx="22" cy="19" r="4" fill="#fff"/><path d="M22 19v-4l4 3z" fill="#d9390f"/></svg></button>
  <div class="tray">
    <svg class="up" viewBox="0 0 8 5"><path d="M0 5l4-5 4 5z" fill="#fff"/></svg>
    <svg viewBox="0 0 16 16"><path d="M1 3l4-2 3 2 3-2 4 2-3 3 3 3-4 2-3-2-3 2-4-2 3-3z" fill="#bfe2fa" stroke="#2a84c8"/><path d="M4 6l4-3 4 3-4 3z" fill="#2f8fd4"/><circle cx="11" cy="12" r="3.500" fill="#36b336"/><path d="M9.500 12l1 1 2-2" stroke="#fff" fill="none"/></svg>
    <svg viewBox="0 0 16 16"><path d="M1 5h3l4-4v14l-4-4H1z" fill="#fff"/><path d="M10 5q2 3 0 6M12 3q3 5 0 10M14 2q3 6 0 12" stroke="#fff" fill="none"/></svg>
    <time>11:22 PM<br>9/2/2013</time>
    <button class="desk" type="button" aria-label="Show desktop"></button>
  </div>
</footer>
</body>
</html>
```
FILE: styles.css
```css
:root {
  --menu: linear-gradient(#565656, #3a3a3a);
  --tool: linear-gradient(#a6a6a6, #8a8a8a);
  --field: linear-gradient(#9c9c9c, #b6b6b6);
  --updown: url("data:image/svg+xml,%3Csvg xmlns='http://www.w3.org/2000/svg' width='7' height='13'%3E%3Cpath d='M3.5 0L7 5H0zM3.5 13L7 8H0z' fill='%23bbb'/%3E%3C/svg%3E");
  --la: url("data:image/svg+xml,%3Csvg xmlns='http://www.w3.org/2000/svg' width='5' height='7'%3E%3Cpath d='M5 0v7L0 3.5z' fill='%23707070'/%3E%3C/svg%3E");
  --ra: url("data:image/svg+xml,%3Csvg xmlns='http://www.w3.org/2000/svg' width='5' height='7'%3E%3Cpath d='M0 0v7L5 3.5z' fill='%23707070'/%3E%3C/svg%3E");
  --open: url("data:image/svg+xml,%3Csvg xmlns='http://www.w3.org/2000/svg' width='9' height='9'%3E%3Cpath d='M0 0h9L4.5 9z' fill='%23222'/%3E%3C/svg%3E");
  --shut: url("data:image/svg+xml,%3Csvg xmlns='http://www.w3.org/2000/svg' width='9' height='9'%3E%3Cpath d='M0 0v9l9-4.5z' fill='%23222'/%3E%3C/svg%3E");
  --grip: url("data:image/svg+xml,%3Csvg xmlns='http://www.w3.org/2000/svg' width='18' height='18'%3E%3Cpath d='M0 0l18 18M6 0l12 12M12 0l6 6' stroke='%23505050'/%3E%3Cpath d='M1 0l17 17M7 0l11 11M13 0l5 5' stroke='%23909090' stroke-width='.7'/%3E%3C/svg%3E");
  --tick: url("data:image/svg+xml,%3Csvg xmlns='http://www.w3.org/2000/svg' width='14' height='14'%3E%3Cpath d='M3 6l3 4 7-9' fill='none' stroke='%23ddd' stroke-width='2'/%3E%3C/svg%3E");
}
* { box-sizing: border-box; margin: 0; padding: 0; }
body { height: 100vh; display: flex; flex-direction: column; overflow: hidden; background: #111; color: #000; }
body, button, input, select { font-family: "DejaVu Sans Condensed", "DejaVu Sans", sans-serif; font-size: 11px; line-height: 16px; }
.defs { position: absolute; width: 0; height: 0; }
svg { width: 16px; height: 16px; flex: none; display: block; }
button { border: 0; background: none; color: #000; }
ul { list-style: none; }

.window { flex: 1; min-height: 0; display: flex; flex-direction: column; padding: 0 8px 4px; border-bottom: 1px solid #000;
  background:
    linear-gradient(#fff, #fff) 3px 0 / 1px 100% no-repeat,
    linear-gradient(#d8dad6, #b9b9b7 20%, #6e6e68 40%, #55524b 72%, #d09a55 75%, #a07038 82%, #222 88%, #777) 0 0 / 9px 100% no-repeat,
    linear-gradient(#ddd, #eee 12%, #ccc 27%, #4d4540 28%, #4d4540 64%, #e8dfd6 66%, #ddd 78%, #554d46 81%, #999) 100% 0 / 9px 100% no-repeat,
    linear-gradient(90deg, #888, #556 40%, #a98 50%, #777); }
.titlebar { position: relative; flex: none; height: 30px; margin: 0 -8px; padding: 0 20px 0 9px; display: flex; align-items: center; gap: 5px; border-top: 1px solid #1b2a1b; border-radius: 7px 7px 0 0; overflow: hidden;
  background: linear-gradient(90deg, #d6d8d0, #c0c4b4 8%, #848c58 20%, #7d8749 30%, #8a8e55 45%, #8c8a50 62%, #6f7444 76%, #5c613c 85%, #aab0a0 93%, #e4e6e2); box-shadow: inset 0 1px #fff; }
.glass { position: absolute; inset: 0; width: 100%; height: 100%; }
.titlebar .logo { position: relative; height: 14px; }
.titlebar h1 { position: relative; font: 12px/16px "Noto Sans", sans-serif; }
.winbtns { position: relative; margin-left: auto; margin-right: -13px; align-self: flex-start; display: flex; border: 1px solid #333; border-top: 0; border-radius: 0 0 5px 5px; overflow: hidden; height: 20px; width: 104px; }
.winbtns button { width: 29px; display: grid; place-items: center; border-right: 1px solid #444; background: linear-gradient(#d8d8d0, #8c8d84 50%, #a9aaa2); }
.winbtns .close { flex: 1; border: 0; background: linear-gradient(#e6a08f, #c94a30 50%, #d8705a); }
.winbtns svg { width: 14px; height: 12px; }

.app { flex: 1; min-height: 0; display: flex; flex-direction: column; border: 1px solid #333; box-shadow: 0 0 0 1px #bbb; background: #727272; }
.main { flex: 1; min-height: 0; display: flex; }
.left { flex: 1; min-width: 0; display: flex; flex-direction: column; }
.right { flex: 0 0 228px; min-width: 0; display: flex; flex-direction: column; border-left: 1px solid #000; }

/* header bars */
.bar { position: relative; flex: none; height: 27px; display: flex; align-items: center; padding: 0 9px; gap: 5px; background: linear-gradient(#777, #696969); border-bottom: 1px solid #000; overflow: hidden; }
.bar > * { flex: none; }
.col { width: 10px; height: 10px; margin: 0 4px; }
.menu { display: flex; gap: 15px; margin: 0 9px 0 4px; padding-top: 2px; }
.info .menu { margin: 0 10px 0 3px; }
.ed { width: 30px; height: 20px; display: flex; align-items: center; padding-left: 2px; border: 1px solid #222; border-radius: 5px; background: var(--updown) right 2px center no-repeat, var(--menu); }
.ed.wide { width: 35px; padding-left: 3px; background: var(--updown) right 3px center no-repeat, var(--menu); }
.sq, .row > button, .idb > button { width: 21px; height: 20px; display: grid; place-items: center; border: 1px solid #333; background: var(--tool); overflow: hidden; }
.sq { width: 20px; border-radius: 5px; }
.row, .idb { display: flex; }
.row > * + *, .idb > * + * { margin-left: -1px; }
.row > :first-child, .idb > :first-child { border-radius: 5px 0 0 5px; }
.row > :last-child, .idb > :last-child { border-radius: 0 5px 5px 0; }
.row > .ed.wide { display: flex; width: 36px; background: var(--updown) right 3px center no-repeat, var(--menu); }
.idb > .dk { width: 33px; padding-right: 8px; background: var(--menu); border-color: #222; }
.row > .dn, .dn { background: #5a5a5a; }
.idb input[type="text"] { width: 120px; padding-left: 3px; }
input[type="text"] { min-width: 0; height: 20px; padding: 2px 4px 0; border: 1px solid #333; border-radius: 0; background: var(--field); color: #000; }
select { appearance: none; height: 20px; min-width: 0; padding: 2px 16px 0 4px; color: #fff; border: 1px solid #222; border-radius: 5px; background: var(--updown) right 6px center no-repeat, var(--menu); }
.w110 { width: 111px; }
.engine { margin-left: 11px; }
.blogo { margin-left: 13px; height: 14px; }
.stats { width: 324px; margin-left: 2px; padding-top: 2px; }
.demo { width: 83px; margin-left: 5px; padding-top: 2px; }
.isel { position: relative; display: flex; }
.isel svg { position: absolute; left: 3px; top: 2px; }
.isel select { width: 126px; padding-left: 19px; }
.row > .w70 { width: 70px; border-radius: 0 5px 5px 0; }
.vbar { height: 28px; border-top: 1px solid #888; }
.tbar { border: 0; }
.tbar .menu { margin-right: 10px; }
.w116 { width: 117px; } .w112 { width: 112px; } .w90 { width: 90px; }
.transport { margin-left: 11px; }
.rec { margin-left: 11px; }
.row > .fld { width: 105px; justify-items: start; padding-left: 3px; background: var(--field); }

/* corner handles of each area */
.corner-tr, .corner-bl { position: relative; }
.corner-tr::after, .corner-bl::before { content: ""; position: absolute; width: 11px; height: 11px; z-index: 2; background: repeating-linear-gradient(45deg, #333 0 1px, #888 1px 2px, transparent 2px 3px); }
.corner-tr::after { right: 0; top: 0; clip-path: polygon(0 0, 100% 0, 100% 100%); }
.corner-bl::before { left: 0; bottom: 0; clip-path: polygon(0 0, 100% 100%, 0 100%); }

/* 3D view */
.view { flex: 1; min-height: 0; display: flex; }
.canvas { flex: 1; min-width: 0; width: auto; height: 100%; }
.canvas text { font-size: 11px; }
.shelf { flex: 0 0 160px; display: flex; flex-direction: column; border-right: 1px solid #555; }
.region { flex: 1; min-height: 0; display: flex; background: #727272; overflow: hidden; }
.oper { flex: 0 0 216px; border-top: 1px solid #999; }
.inner { flex: 1; min-width: 0; overflow: hidden; }
.shelf .inner { padding: 0 8px; }
.oper .inner { padding-left: 7px; padding-top: 1px; }
.shelf .head { border: 0; box-shadow: none; background-position: 5px 8px, right 0 top 2px; padding-left: 17px; }
.shelf .lbl { padding-left: 5px; }
.shelf .grp + .lbl { margin-top: 5px; }
.oper .gap { margin-top: 6px; }
.oper .gap2 { margin-top: 4px; }
.oper .body { padding-top: 8px; }
.oper .reset { margin-top: 4px; }

.head { height: 24px; padding: 5px 0 0 20px; font-size: 12px; line-height: 16px; font-weight: normal; white-space: nowrap; color: #111; border-top: 1px solid #444; box-shadow: inset 0 1px #888; background: var(--shut) 8px 8px no-repeat, var(--grip) right 3px top 3px no-repeat; }
.head.open { background-image: var(--open), var(--grip); }
.head label { display: flex; align-items: center; gap: 6px; }
.body { padding: 9px 0 7px; }
.lbl { height: 20px; padding: 3px 0 0 5px; white-space: nowrap; }
.grp { display: flex; flex-direction: column; }
.grp > * { width: 100%; height: 21px; flex: none; margin-top: -1px; text-align: left; padding-left: 4px; border: 1px solid #363636; background: var(--tool); }
.grp > button { padding-top: 2px; }
.grp > :first-child { height: 20px; margin-top: 0; border-radius: 5px 5px 0 0; }
.grp > button:first-child { padding-top: 1px; }
.grp > :last-child { border-radius: 0 0 5px 5px; }
.num > input[type="text"], .numrow > input[type="text"] { text-align: center; padding: 2px 0 0; background: var(--la) 8px center no-repeat, var(--ra) right 8px center no-repeat, var(--field); }
.num > input[type="text"] { height: 21px; padding-top: 3px; }
.num > input[type="text"]:first-child { height: 20px; padding-top: 2px; border-radius: 10px 10px 0 0; }
.num > input[type="text"]:last-child { border-radius: 0 0 10px 10px; }
.num > input[type="text"]:only-child { border-radius: 10px; }
.numrow > input[type="text"]:first-child { border-radius: 10px 0 0 10px; }
.numrow > input[type="text"]:last-child { border-radius: 0 10px 10px 0; }
.numrow > input[type="text"]:only-child { border-radius: 10px; }
.tight > input[type="text"] { background-position: 7px center, right 7px center, 0 0; }
.num > input.pct[type="text"] { background: linear-gradient(90deg, #777 54%, transparent 54%), var(--field); }
.btn { width: 100%; height: 20px; display: block; border: 1px solid #363636; border-radius: 5px; background: var(--tool); }
.btn.ic { display: flex; align-items: center; padding: 0 2px; }
.btn.ic span { flex: 1; padding-top: 1px; }

input[type="checkbox"] { appearance: none; flex: none; width: 14px; height: 14px; border: 1px solid #333; border-radius: 4px; background: linear-gradient(#4a4a4a, #5c5c5c); }
input[type="checkbox"]:checked { background: var(--tick) center no-repeat, linear-gradient(#4a4a4a, #5c5c5c); }
.chk { height: 22px; display: flex; align-items: center; gap: 5px; white-space: nowrap; }
.chk span { padding-top: 2px; }
.on { color: #fff; }
.off { opacity: .5; }

.npanel { flex: 0 0 180px; border-left: 1px solid #888; }
.npanel .inner { padding: 0 6px 0 4px; }
.npanel .body { padding-left: 3px; padding-right: 3px; }
.npanel .vs { margin-right: 4px; }
.npanel .camrow { margin-top: -6px; padding-top: 0; }
.dim { background: #8c8c8c; color: #444; }
.dim span { text-align: left; }
.dim svg { opacity: .7; }
.npanel .item { display: flex; align-items: center; gap: 7px; padding-left: 7px; }
.item input[type="text"] { flex: 1; border-radius: 4px; }
.checks .chk { padding-left: 3px; }
.npanel .checks { padding-bottom: 5px; }
.checks .sp { margin: 9px 0 0; }
.checks .lbl { height: 21px; }
.checks .num + .sp { margin-top: 11px; height: 20px; }

/* scrollbars */
.vs { flex: none; width: 13px; margin: 5px 4px 4px 0; border: 1px solid #484848; border-radius: 7px; background: linear-gradient(90deg, #505050, #626262); }
.vs i { display: block; width: 13px; margin: -1px; border: 1px solid #3c3c3c; border-radius: 7px; background: linear-gradient(90deg, #999, #7c7c7c); }
.shelf .vs { margin-right: 3px; }
.t90 { height: 91px; } .t80 { height: 81px; }
.vs .tn { margin-top: 190px; height: 263px; }
.vs .to { margin-top: 3px; height: 38px; }
.vs .tp { height: 487px; }

/* timeline */
.timeline { flex: 0 0 53px; display: flex; background: #727272; }
.before { flex: 0 0 205px; border-right: 2px solid #3a3a3a; background: repeating-linear-gradient(90deg, transparent 0 9px, #404040 9px 10px, transparent 10px 27px, #333 27px 28px, transparent 28px 35px), #454545; }
.during { flex: 1; border-left: 3px solid #5cc43c; background: repeating-linear-gradient(90deg, transparent 0 13px, #6a6a6a 13px 14px, transparent 14px 30px, #5a5a5a 30px 31px, transparent 31px 35px), #727272; }
.after { flex: 0 0 117px; background: repeating-linear-gradient(90deg, transparent 0 17px, #404040 17px 18px, transparent 18px 34px, #333 34px 35px), #454545; }
.ruler { flex: none; height: 17px; padding: 0 1px 2px 3px; }
.ruler div { height: 15px; display: flex; padding-left: 8px; border: 1px solid #555; border-radius: 7px; background: linear-gradient(#999, #777); }
.ruler span { flex: 1; width: 0; display: flex; justify-content: center; line-height: 14px; font-size: 12px; }

/* outliner */
.obar { height: 26px; border: 0; padding: 2px 0 0 9px; }
.obar .menu { margin-right: 7px; }
.obar .scenes { width: 80px; border-radius: 5px 0 0 5px; background: var(--menu); }
.outliner { flex: 0 0 79px; display: flex; overflow: hidden; position: relative; }
.outliner ul { flex: 0 0 152px; min-width: 0; overflow: hidden; margin-top: -6px; }
.outliner ul::before { content: ""; position: absolute; left: 25px; top: 12px; bottom: 0; border-left: 1px solid #333; }
.outliner li { height: 20px; display: flex; align-items: center; gap: 4px; padding-left: 1px; background: #727272; white-space: nowrap; overflow: hidden; }
.outliner li:nth-child(even) { background: #6a6a6a; }
.outliner li span { padding-top: 2px; }
.outliner li.hl { background: #7c8488; padding-top: 2px; }
.outliner .hl .e { margin-right: 4px; }
.outliner .e { position: relative; width: 10px; height: 10px; }
.outliner .l1 { padding-left: 26px; gap: 5px; }
.outliner .l1 .e { margin-right: -3px; }
.outliner .l2 { padding-left: 38px; gap: 5px; }
.outliner .l3 { padding-left: 21px; gap: 5px; }
.outliner .l3 .e { margin-right: 2px; }
.outliner b { font-weight: normal; margin: 0 3px; }
.cols { flex: none; display: flex; width: 60px; background: linear-gradient(#727272 14px, #6a6a6a 14px 34px, #727272 34px 54px, #6a6a6a 54px 74px, #727272 74px); }
.cols span { width: 20px; padding: 57px 0 0 1px; border-left: 1px solid #555; }
.outliner .vs { width: 13px; margin: 5px 3px 5px -1px; position: relative; }
.hs { flex: 0 0 19px; padding: 4px 20px 1px 5px; border-bottom: 1px solid #000; }
.hs div { height: 13px; border: 1px solid #484848; border-radius: 7px; background: #595959; }
.hs i { display: block; width: 75%; height: 13px; margin: -1px; border: 1px solid #3c3c3c; border-radius: 7px; background: linear-gradient(#999, #7c7c7c); }

/* properties */
.pbar { height: 26px; border-bottom: 1px solid #888; padding-right: 0; gap: 6px; }
.tabs { display: flex; }
.tabs button { width: 22px; height: 20px; display: grid; place-items: center; border: 1px solid #222; border-left-width: 0; background: var(--menu); }
.tabs button:first-child { border-left-width: 1px; border-radius: 4px 0 0 4px; }
.tabs button:not(.act) svg { opacity: .75; }
.tabs .act, .samples > button.act { background: linear-gradient(#4b76ba, #5f8cd6); }
.props .inner { padding: 0 7px 0 5px; }
.props .body { padding-left: 3px; padding-right: 3px; }
.props .vs { margin-right: 4px; margin-bottom: 5px; width: 12px; }
.props .vs i { width: 12px; }
.crumb { height: 35px; display: flex; align-items: center; padding: 0 0 0 5px; gap: 6px; }
.crumb span { margin-left: -5px; padding-top: 1px; }
.two { display: grid; grid-template-columns: 1fr 1fr; gap: 8px; }
.disp { display: flex; justify-content: space-between; align-items: center; padding: 5px 0 0 5px; }
.disp select { width: 125px; }
.preset { margin-bottom: 5px; }
.preset select { flex: 1; }
.row.preset > select { border-radius: 5px 0 0 5px; }
.two select { width: 100%; }
.remap input { width: 50%; flex: 1; }
.dims .pair { display: flex; gap: 14px; padding: 1px 0 0 3px; margin-bottom: -2px; }
.samples { height: 20px; }
.samples > button { flex: 1; padding-top: 1px; color: #fff; background: var(--menu); }
.samples > button.act { color: #000; }
.two > div > .chk { padding-left: 3px; padding-top: 2px; }
.size { margin-top: 2px; }
.row.out > input { flex: 1; border-radius: 5px 0 0 5px; }
.outchk { padding-top: 4px; }
.outchk .chk { padding-left: 3px; }

/* taskbar */
.taskbar { flex: none; height: 42px; display: flex; align-items: stretch; padding: 1px 2px 1px 3px; border-top: 1px solid #b9b89a; background: linear-gradient(rgba(30, 30, 0, .45), transparent 30%), linear-gradient(90deg, #4c4a2a, #6c6e3c 12%, #7c8548 25%, #8d9650 40%, #7f8a48 50%, #a0a45c 54%, #76803c 62%, #6b7430 75%, #8d9050 86%, #57562f 92%, #3c3a28); }
.taskbar > button { width: 62px; display: grid; place-items: center; }
.taskbar > button svg { width: 32px; height: 32px; }
.taskbar > .orb { width: 50px; margin-right: 6px; }
.taskbar > .orb svg { width: 38px; height: 38px; }
.taskbar > .run { width: 58px; margin: 0 2px; border: 1px solid #d5d6b8; border-radius: 3px; background: linear-gradient(135deg, rgba(255, 255, 255, .4), rgba(255, 255, 255, .1) 50%); }
.taskbar > .run.on { background: linear-gradient(135deg, rgba(255, 255, 255, .7), rgba(255, 255, 255, .35)); }
.tray { margin-left: auto; display: flex; align-items: center; gap: 8px; color: #fff; }
.tray .up { width: 8px; height: 5px; margin-right: 5px; }
.tray time { width: 54px; margin: 0 2px 0 6px; text-align: center; white-space: nowrap; font: 12px/17px "Noto Sans", sans-serif; }
.desk { align-self: stretch; width: 13px; border: 1px solid #aaa98a; background: linear-gradient(135deg, #777858, #3b3b28); }
```
